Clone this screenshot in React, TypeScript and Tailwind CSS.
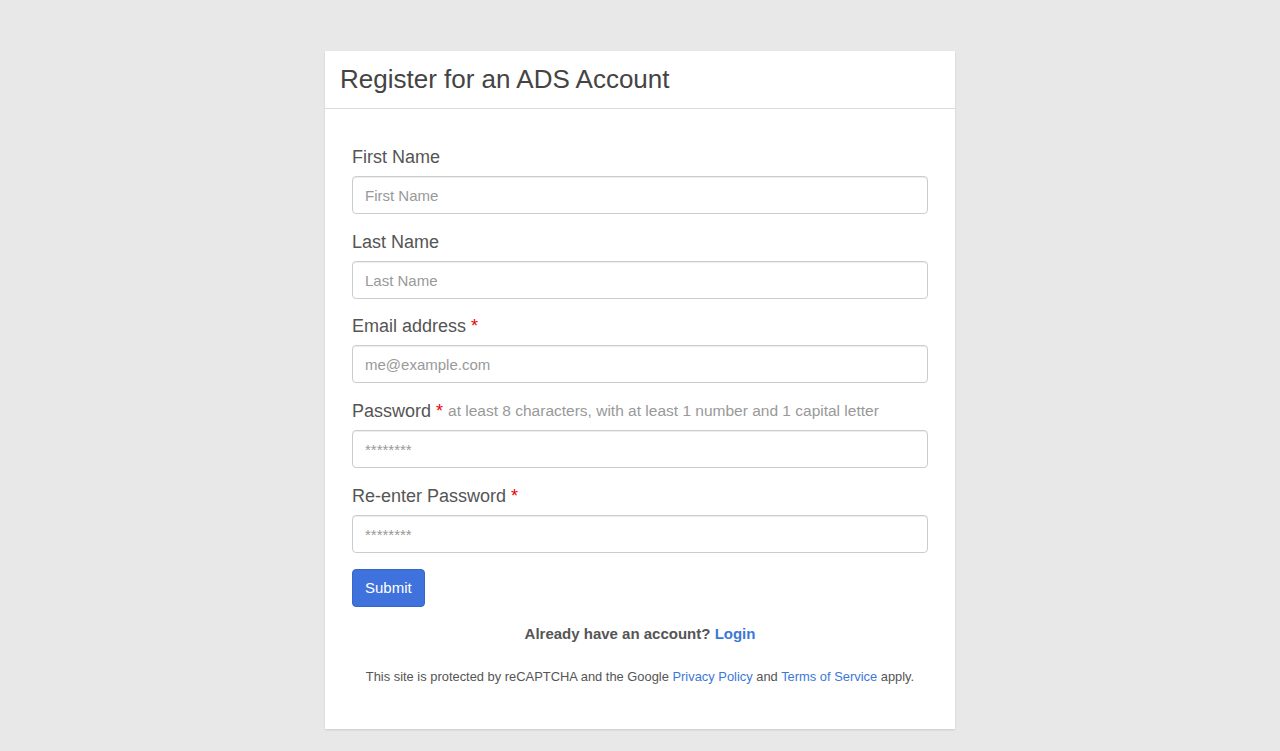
export default function App() {
  const fields = [
    { label: 'First Name', placeholder: 'First Name', required: false, hint: '', mb: 'mb-[15px]' },
    { label: 'Last Name', placeholder: 'Last Name', required: false, hint: '', mb: 'mb-[14px]' },
    { label: 'Email address', placeholder: 'me@example.com', required: true, hint: '', mb: 'mb-[15px]' },
    {
      label: 'Password',
      placeholder: '********',
      required: true,
      hint: 'at least 8 characters, with at least 1 number and 1 capital letter',
      mb: 'mb-[15px]',
    },
    { label: 'Re-enter Password', placeholder: '********', required: true, hint: '', mb: 'mb-[15px]' },
  ];

  return (
    <div
      className="min-h-[751px] bg-[#e8e8e8] pt-[51px] pb-[22px]"
      style={{ fontFamily: '"Liberation Sans", Arial, sans-serif' }}
    >
      <div className="mx-auto w-[630px] bg-white shadow-[0_1px_2px_rgba(0,0,0,0.12)]">
        <div className="h-[58px] border-b border-[#dcdcdc] px-[15px] flex items-center">
          <h1 className="text-[26px] leading-none text-[#444] pb-[1px]">Register for an ADS Account</h1>
        </div>
        <div className="px-[27px] pt-[35px] pb-[43px]">
          {fields.map((f) => (
            <div key={f.label} className={f.mb}>
              <label className="block h-[26px] text-[18px] leading-[26px] text-[#555] mb-[6px] whitespace-nowrap">
                {f.label}
                {f.required && <span className="text-[#e00] ml-[5px]">*</span>}
                {f.hint && (
                  <span className="text-[15.5px] leading-[26px] text-[#999] ml-[5px] align-top">{f.hint}</span>
                )}
              </label>
              <input
                type="text"
                placeholder={f.placeholder}
                className="block w-full h-[38px] border border-[#ccc] rounded-[4px] px-[12px] text-[15px] text-[#555] placeholder:text-[#999] shadow-[inset_0_1px_1px_rgba(0,0,0,0.075)] outline-none"
              />
            </div>
          ))}
          <button className="mt-[1px] h-[38px] px-[12px] bg-[#3f72dc] border border-[#3566c9] rounded-[4px] text-white text-[15px]">
            Submit
          </button>
          <p className="mt-[17px] text-center text-[15px] font-bold text-[#555] leading-[20px]">
            Already have an account? <a className="text-[#3c78d8]">Login</a>
          </p>
          <p className="mt-[24px] text-center text-[12.9px] text-[#555] leading-[18px]">
            This site is protected by reCAPTCHA and the Google{' '}
            <a className="text-[#3c78d8]">Privacy Policy</a> and{' '}
            <a className="text-[#3c78d8]">Terms of Service</a> apply.
          </p>
        </div>
      </div>
    </div>
  );
}
